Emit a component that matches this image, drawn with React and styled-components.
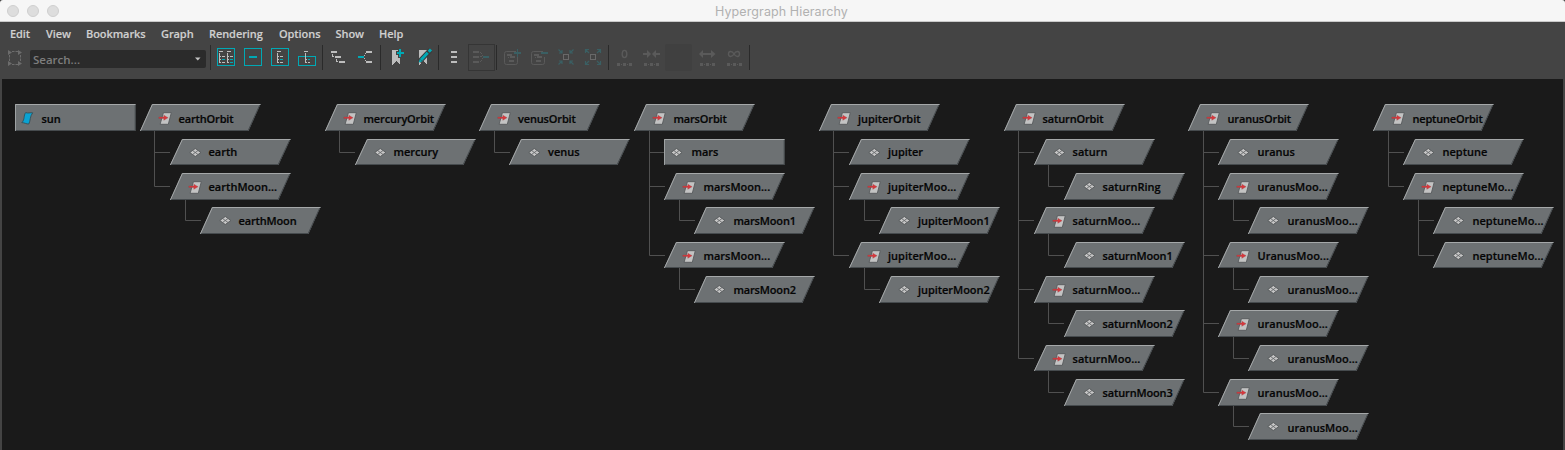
import React from "react";
import styled, { createGlobalStyle } from "styled-components";

const Global = createGlobalStyle`
  * { box-sizing: border-box; }
  html, body { margin: 0; background: #3a3a3a; overflow: hidden; }
`;

const Window = styled.div`
  width: 1565px;
  height: 450px;
  display: flex;
  flex-direction: column;
  background: #444444;
  border-radius: 3px 3px 0 0;
  overflow: hidden;
  font-family: "Open Sans", "Noto Sans", sans-serif;
`;

const TitleBar = styled.header`
  height: 22px;
  flex: none;
  display: grid;
  grid-template-columns: 1fr auto 1fr;
  align-items: center;
  padding-right: 2px;
  background: #f6f6f6;
  border-bottom: 1px solid #c9c9c9;
`;

const Lights = styled.div`
  display: flex;
  gap: 8px;
  padding-left: 7px;
`;

const Light = styled.span`
  width: 12px;
  height: 12px;
  border-radius: 50%;
  background: #dddddd;
  border: 1px solid #cfcfcf;
`;

const Title = styled.h1`
  margin: 0;
  font: 400 12.5px/21px Inter, sans-serif;
  letter-spacing: 0.1px;
  color: #b1b1b1;
  padding-top: 1px;
`;

const MenuBar = styled.nav`
  height: 22px;
  flex: none;
  display: flex;
  padding: 2px 0 0 10px;
`;

const MenuItem = styled.span`
  width: ${(p) => p.$w}px;
  font-size: 11px;
  line-height: 20px;
  font-weight: 600;
  letter-spacing: -0.08px;
  color: #d0d0d0;
  -webkit-text-stroke: 0.15px #d0d0d0;
  white-space: nowrap;
`;

const Toolbar = styled.div`
  height: 35px;
  flex: none;
  display: flex;
  align-items: flex-start;
`;

const FrameButton = styled.div`
  width: 30px;
  height: 27px;
  flex: none;
`;

const Search = styled.div`
  width: 176px;
  height: 18px;
  margin: 6px 3px 0 0;
  padding: 0 5px 0 3px;
  flex: none;
  display: flex;
  align-items: center;
  justify-content: space-between;
  background: #2b2b2b;
  border-radius: 2px;
  color: #7e7e7e;
  font-size: 11.5px;
  font-weight: 600;
  line-height: 18px;
`;

const SearchHint = styled.span`
  padding-top: 2px;
  line-height: 16px;
`;

const Separator = styled.i`
  width: 1px;
  height: 25px;
  margin: 1px 2px 0 1px;
  background: #2a2a2a;
  flex: none;
`;

const Tool = styled.span`
  width: 27px;
  height: 27px;
  flex: none;
  display: block;
  margin-right: ${(p) => p.$after || 0}px;
  border-radius: ${(p) => (p.$blank ? 2 : 0)}px;
  background: ${(p) => (p.$blank ? "#404040" : "transparent")};
  border: ${(p) => (p.$pressed ? "1px solid #353535" : "0")};
  & > svg { display: block; margin: ${(p) => (p.$pressed ? "-1px" : "0")}; }
`;

const Canvas = styled.main`
  position: relative;
  flex: 1;
  margin: 0 2px;
  background: #1a1a1a;
  overflow: hidden;
`;

const Links = styled.svg`
  position: absolute;
  left: 0;
  top: 0;
`;

const NodeBox = styled.div`
  position: absolute;
  left: ${(p) => p.$x}px;
  top: ${(p) => p.$y}px;
  width: 121px;
  height: ${(p) => p.$h}px;
`;

const Shape = styled.svg`
  position: absolute;
  inset: 0;
`;

const Label = styled.span`
  position: relative;
  display: block;
  margin-top: ${(p) => p.$shift}px;
  padding-left: ${(p) => p.$indent}px;
  font-size: 11px;
  font-weight: 600;
  letter-spacing: ${(p) => p.$track}px;
  line-height: 27px;
  white-space: nowrap;
  color: #050505;
  -webkit-text-stroke: 0.2px #050505;
`;

const T = "#00a9b5";
const W = "#bdbdbd";
const D = "#5a5a5a";
const DT = "#3a5f63";

/* Pixel icon: a list of [x, y, width, height, colour] cells. */
const Cells = ({ list, children }) => (
  <svg width="27" height="27" viewBox="0 0 27 27" shapeRendering="crispEdges">
    {list.map(([x, y, w, h, c], i) => (
      <rect key={i} x={x} y={y} width={w} height={h} fill={c} />
    ))}
    {children}
  </svg>
);

const frame = (x, y, w, h, c) => [
  [x, y, w, 1, c], [x, y + h - 1, w, 1, c], [x, y, 1, h, c], [x + w - 1, y, 1, h, c],
];
const tree = (x, last = W) => [
  [x, 7, 4, 1, W], [x, 9, 1, 10, W],
  [x + 1, 12, 1, 1, W], [x + 3, 12, 3, 1, W],
  [x + 1, 15, 1, 1, W], [x + 3, 15, 3, 1, T],
  [x + 1, 18, 1, 1, W], [x + 3, 18, 3, 1, last],
];
const dots = [[6, 19, 3, 3, D], [10, 20, 1, 1, D], [12, 19, 3, 3, D], [16, 20, 1, 1, D], [18, 19, 3, 3, D]];
const card = (
  <path d="M17 7.5H7.500Q5.500 7.500 5.500 9.500V18.500Q5.500 20.500 7.500 20.500H16.500Q18.500 20.500 18.500 18.500V13" fill="none" stroke={D} shapeRendering="auto" />
);

const icons = {
  all: <Cells list={[...frame(4, 4, 18, 18, T), ...tree(6), ...tree(14, T)]} />,
  branch: <Cells list={[...frame(4, 4, 18, 18, T), [9, 12, 8, 2, T]]} />,
  hierarchy: <Cells list={[...frame(4, 4, 18, 18, T), ...tree(10)]} />,
  outliner: <Cells list={[...frame(4, 12, 18, 10, T), [10, 7, 4, 1, W], [11, 9, 1, 10, W], [12, 15, 1, 1, W], [14, 15, 2, 1, T], [12, 18, 1, 1, W], [14, 18, 2, 1, W]]} />,
  stepDown: <Cells list={[[6, 7, 6, 2, W], [7, 10, 1, 3, W], [8, 12, 1, 1, W], [10, 12, 6, 2, W], [11, 15, 1, 3, W], [12, 17, 1, 1, W], [14, 17, 6, 2, W]]} />,
  fork: <Cells list={[[6, 12, 6, 2, T], [12, 11, 1, 1, W], [13, 9, 1, 1, W], [14, 7, 6, 2, W], [12, 14, 1, 1, W], [13, 16, 1, 1, W], [14, 17, 6, 2, W]]} />,
  mark: (
    <Cells list={[]}>
      <path d="M9 6H17V21L13 17L9 21Z" fill={W} />
      <path d="M16 5H18V8H21V10H18V13H16V10H14V8H16Z" fill={T} stroke="#444" strokeWidth="1.500" paintOrder="stroke" />
    </Cells>
  ),
  edit: (
    <Cells list={[]}>
      <path d="M9 6H17V21L13 17L9 21Z" fill={W} />
      <g shapeRendering="auto">
        <path d="M9.500 17.500L20.500 6" stroke="#3b3b3b" strokeWidth="5" />
        <path d="M11 16L17.700 8.800M18.700 7.800L21 5.500" stroke={T} strokeWidth="3" />
        <path d="M8.700 18.500L9.800 15L12.200 17.500Z" fill={T} />
      </g>
    </Cells>
  ),
  list: <Cells list={[[10, 7, 6, 2, W], [10, 12, 6, 2, W], [10, 17, 6, 2, W]]} />,
  merge: <Cells list={[[5, 7, 6, 2, D], [5, 12, 6, 2, D], [5, 17, 6, 2, D], [12, 8, 1, 1, D], [13, 9, 1, 1, D], [14, 11, 1, 1, D], [12, 12, 2, 1, D], [14, 14, 1, 1, D], [13, 16, 1, 1, D], [12, 17, 1, 1, D], [15, 12, 6, 2, DT]]} />,
  add: <Cells list={[[8, 10, 5, 2, D], [9, 13, 1, 1, D], [11, 12, 5, 2, D], [10, 16, 5, 2, D], [18, 5, 1, 8, DT], [15, 8, 7, 2, DT]]}>{card}</Cells>,
  remove: <Cells list={[[8, 10, 5, 2, D], [9, 13, 1, 1, D], [11, 12, 5, 2, D], [10, 16, 5, 2, D], [15, 8, 7, 2, DT]]}>{card}</Cells>,
  inward: (
    <Cells list={frame(10, 10, 6, 6, "#696969")}>
      <path d="M5.500 5.500L9 9M20.500 5.500L17 9M5.500 20.500L9 17M20.500 20.500L17 17M9 6V9H6M17 6V9H20M9 20V17H6M17 20V17H20" stroke={DT} strokeWidth="1.200" fill="none" shapeRendering="auto" />
    </Cells>
  ),
  outward: (
    <Cells list={frame(10, 10, 6, 6, "#696969")}>
      <path d="M6 6L9 9M20 6L17 9M6 20L9 17M20 20L17 17M5.500 9V5.500H9M17 5.500H20.500V9M5.500 17V20.500H9M17 20.500H20.500V17" stroke={DT} strokeWidth="1.200" fill="none" shapeRendering="auto" />
    </Cells>
  ),
  zero: <Cells list={dots}><ellipse cx="13.500" cy="10" rx="2.300" ry="3.600" fill="none" stroke={D} strokeWidth="1.400" shapeRendering="auto" /></Cells>,
  shrink: <Cells list={dots}><path d="M5 9H9V6L13 10L9 14V11H5ZM22 9H18V6L14 10L18 14V11H22Z" fill={D} shapeRendering="auto" /></Cells>,
  grow: <Cells list={dots}><path d="M5 10L9 6V9H17V6L21.500 10L17 14V11H9V14Z" fill={D} shapeRendering="auto" /></Cells>,
  infinity: <Cells list={dots}><path d="M13 10C11 6.500 7.500 7 7.500 10S11 13.500 13 10S18.500 7 18.500 10S15 13.500 13 10Z" fill="none" stroke={D} strokeWidth="1.400" shapeRendering="auto" /></Cells>,
};

const toolGroups = [
  ["all", "branch", "hierarchy", "outliner"],
  ["stepDown", "fork"],
  ["mark", "edit"],
  ["list", "merge"],
  ["add", "remove", "inward", "outward"],
  ["zero", "shrink", "blank", "grow", "infinity"],
];

const menus = [["Edit", 36], ["View", 40], ["Bookmarks", 75], ["Graph", 48], ["Rendering", 70], ["Options", 56.5], ["Show", 43.5], ["Help", 30]];

/* Columns of the graph: [left edge, [[depth, row, label, icon, rectangular?]]] */
const columns = [
  [15, [[0, 0, "sun", "surface", true]]],
  [140, [[0, 0, "earthOrbit", "group"], [1, 1, "earth"], [1, 2, "earthMoon...", "group"], [2, 3, "earthMoon"]]],
  [325, [[0, 0, "mercuryOrbit", "group"], [1, 1, "mercury"]]],
  [479.5, [[0, 0, "venusOrbit", "group"], [1, 1, "venus"]]],
  [634.4, [[0, 0, "marsOrbit", "group"], [1, 1, "mars", "mesh", true], [1, 2, "marsMoon...", "group"], [2, 3, "marsMoon1"], [1, 4, "marsMoon...", "group"], [2, 5, "marsMoon2"]]],
  [819, [[0, 0, "jupiterOrbit", "group"], [1, 1, "jupiter"], [1, 2, "jupiterMoo...", "group"], [2, 3, "jupiterMoon1"], [1, 4, "jupiterMoo...", "group"], [2, 5, "jupiterMoon2"]]],
  [1003.6, [[0, 0, "saturnOrbit", "group"], [1, 1, "saturn"], [2, 2, "saturnRing"], [1, 3, "saturnMoo...", "group"], [2, 4, "saturnMoon1"], [1, 5, "saturnMoo...", "group"], [2, 6, "saturnMoon2"], [1, 7, "saturnMoo...", "group"], [2, 8, "saturnMoon3"]]],
  [1188.5, [[0, 0, "uranusOrbit", "group"], [1, 1, "uranus"], [1, 2, "uranusMoo...", "group"], [2, 3, "uranusMoo..."], [1, 4, "UranusMoo...", "group"], [2, 5, "uranusMoo..."], [1, 6, "uranusMoo...", "group"], [2, 7, "uranusMoo..."], [1, 8, "uranusMoo...", "group"], [2, 9, "uranusMoo..."]]],
  [1373.5, [[0, 0, "neptuneOrbit", "group"], [1, 1, "neptune"], [1, 2, "neptuneMo...", "group"], [2, 3, "neptuneMo..."], [2, 4, "neptuneMo..."]]],
];

const tracking = (label) => {
  if (label.endsWith("...")) return 0.02;
  if (label.startsWith("jupiter")) return -0.05;
  if (label === "neptuneOrbit") return -0.2;
  if (/Orbit|Moon/.test(label)) return -0.15;
  return 0;
};

const ORIGIN_X = 2;
const ORIGIN_Y = 79;
const rowTop = (r) => Math.round(104.3 + (r * 103) / 3) - ORIGIN_Y;
const rowHeight = (r) => (r % 3 === 1 ? 26 : 27);
const labelShift = (r) => (r === 0 || r === 9 ? 1 : r === 1 ? -1 : 0);

const linkPaths = columns.flatMap(([x, nodes]) =>
  nodes.flatMap(([depth, row], i) => {
    if (!depth) return [];
    const parent = nodes.slice(0, i).reverse().find((n) => n[0] === depth - 1);
    const vx = x - ORIGIN_X + (depth - 1) * 30 + 14.7 + (depth > 1 ? 0.3 : 0);
    const lx = Math.floor(vx) + 0.5;
    const top = rowTop(parent[1]) + rowHeight(parent[1]);
    return [`M${lx} ${top}V${rowTop(row) + 13.5}H${lx + 15.5}`];
  })
);

function NodeIcon({ kind, x }) {
  if (kind === "group")
    return (
      <g transform={`translate(${x - 6.5} 8)`}>
        <path d="M4.600 .7H12.500L9.500 12.300H1.300Z" fill="#c3c3c3" stroke="#575a5c" strokeWidth=".9" />
        <path d="M0 5H5V3.200L9.300 5.700L5 8.300V6.400H0Z" fill="#d9373c" stroke="#8a4446" strokeWidth=".3" />
      </g>
    );
  if (kind === "surface")
    return <path transform={`translate(${x - 6} 8)`} d="M4.200 .6C6.500 1.600 8.500 .4 11.200 .8C8.200 4.500 9.200 8.500 7.300 12C5 12.200 3 10.600 .3 10.600C3.600 7.500 1.800 3.500 4.200 .6Z" fill="#0aa3d3" stroke="#34474e" strokeWidth=".8" />;
  return (
    <g transform={`translate(${x} 13.5)`}>
      <path d="M-5.500 0L0-4L5.500 0L0 4Z" fill="#c6c6c6" stroke="#4d5052" strokeWidth=".8" />
      <path d="M-2.700-2L2.700 2M2.700-2L-2.700 2" stroke="#66696b" strokeWidth=".9" />
    </g>
  );
}

function GraphNode({ x, row, label, kind = "mesh", rect }) {
  const h = rowHeight(row);
  const s = rect ? 0 : 12;
  const left = Math.floor(x + 0.4);
  const nudge = x > 600 ? 0.5 : 0;
  const indent = (rect ? 26.5 : 38.5) + (x - left) + nudge;
  return (
    <NodeBox $x={left} $y={rowTop(row)} $h={h}>
      <Shape width="121" height={h}>
        <path d={`M${s} 0H120.500L${120.5 - s} ${h}H0Z`} fill="#6d7173" />
        <path d={`M${120.2} 0L${120.2 - s} ${h - 0.5}H0`} fill="none" stroke="#464b4e" />
        <path d={`M.4 ${h}L${s + 0.4} .5H120.500`} fill="none" stroke="#a5a8a9" />
        <NodeIcon kind={kind} x={rect ? 12.5 : 25.3} />
      </Shape>
      <Label $indent={indent} $shift={labelShift(row)} $track={tracking(label)}>{label}</Label>
    </NodeBox>
  );
}

export default function App() {
  return (
    <>
      <Global />
      <Window>
        <TitleBar>
          <Lights><Light /><Light /><Light /></Lights>
          <Title>Hypergraph Hierarchy</Title>
        </TitleBar>
        <MenuBar>
          {menus.map(([name, w]) => <MenuItem key={name} $w={w}>{name}</MenuItem>)}
        </MenuBar>
        <Toolbar>
          <FrameButton>
            <svg width="30" height="27">
              <path d="M12 7.500H18M12 20.500H18M9.500 11V17M20.500 11V17" stroke="#6c6c6c" strokeDasharray="2.500 1" fill="none" />
              <path d="M8 6L12 8.500L8 11ZM18 6L22 8.500L18 11ZM8 17L12 19.500L8 22ZM18 17L22 19.500L18 22Z" fill="#6c6c6c" />
            </svg>
          </FrameButton>
          <Search>
            <SearchHint>Search...</SearchHint>
            <svg width="6" height="4"><path d="M0 .5H5.500L2.800 3.500Z" fill="#c4c4c4" /></svg>
          </Search>
          <Separator />
          {toolGroups.map((group, g) => (
            <React.Fragment key={g}>
              {group.map((name) => (
                <Tool key={name} $pressed={name === "merge"} $blank={name === "blank"} $after={name === "blank" ? 2 : 0}>
                  {icons[name]}
                </Tool>
              ))}
              <Separator />
            </React.Fragment>
          ))}
        </Toolbar>
        <Canvas>
          <Links width="1561" height="371">
            {linkPaths.map((d, i) => <path key={i} d={d} fill="none" stroke="#505050" />)}
          </Links>
          {columns.map(([x, nodes]) =>
            nodes.map(([depth, row, label, kind, rect]) => (
              <GraphNode key={`${x}-${row}`} x={x - ORIGIN_X + depth * 30} row={row} label={label} kind={kind} rect={rect} />
            ))
          )}
        </Canvas>
      </Window>
    </>
  );
}
